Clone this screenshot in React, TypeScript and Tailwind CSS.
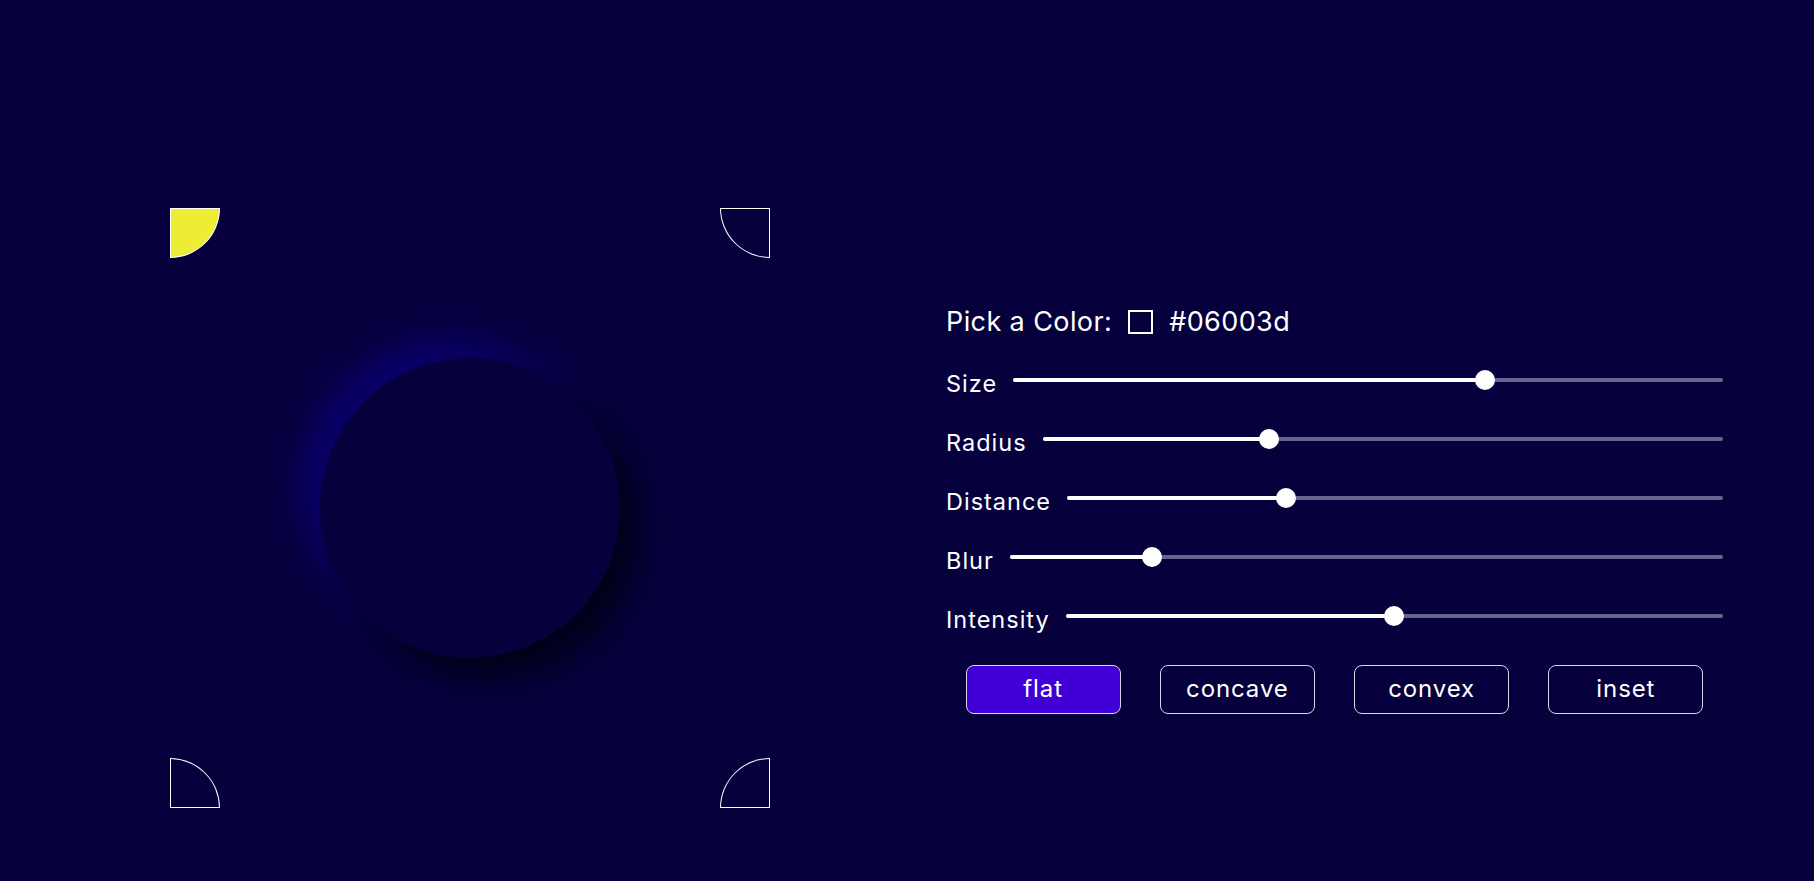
import React from "react";

const sliders: { label: string; f: number }[] = [
  { label: "Size", f: 0.67 },
  { label: "Radius", f: 0.328 },
  { label: "Distance", f: 0.328 },
  { label: "Blur", f: 0.19 },
  { label: "Intensity", f: 0.5 },
];

const shapes = ["flat", "concave", "convex", "inset"];

function Slider({ label, f }: { label: string; f: number }) {
  return (
    <div className="flex h-[59px] items-center">
      <span className="text-[23.5px] leading-normal tracking-[1px] text-white">{label}</span>
      <div className="relative mb-[7px] ml-[16px] h-5 flex-1">
        <div className="absolute left-0 right-0 top-[8px] h-1 rounded-full bg-[#66648e]" />
        <div
          className="absolute left-0 top-[8px] h-1 rounded-full bg-white"
          style={{ width: `calc(10px + ${f} * (100% - 20px))` }}
        />
        <div
          className="absolute top-0 h-5 w-5 rounded-full bg-white"
          style={{ left: `calc(${f} * (100% - 20px))` }}
        />
      </div>
    </div>
  );
}

export default function App() {
  return (
    <div
      className="flex h-[881px] w-full items-center bg-[#06003d] pl-[170px] pt-[135px] text-white"
      style={{ fontFamily: "Inter, 'Noto Sans', sans-serif" }}
    >
      {/* preview */}
      <div className="flex h-[600px] w-[600px] shrink-0 flex-col">
        <div className="flex h-[50px] justify-between">
          <div className="h-[50px] w-[50px] rounded-br-[50px] border border-white bg-[#eded35]" />
          <div className="h-[50px] w-[50px] rounded-bl-[50px] border border-white" />
        </div>
        <div className="flex flex-1 items-center justify-center">
          <div className="h-[300px] w-[300px] rounded-full bg-[#06003d] shadow-[20px_20px_34px_#020018,-20px_-20px_34px_#0b006c]" />
        </div>
        <div className="flex h-[50px] justify-between">
          <div className="h-[50px] w-[50px] rounded-tr-[50px] border border-white" />
          <div className="h-[50px] w-[50px] rounded-tl-[50px] border border-white" />
        </div>
      </div>

      {/* controls */}
      <div className="ml-[176px] flex w-[777px] flex-col">
        <div className="flex items-center text-[27px] leading-normal tracking-[0.4px]">
          <span>Pick a Color:</span>
          <span className="ml-[16px] h-[24px] w-[25px] border-[2.5px] border-white bg-[#06003d]" />
          <span className="ml-[16px]">#06003d</span>
        </div>
        <div className="mt-[12px] flex flex-col">
          {sliders.map((s) => (
            <Slider key={s.label} label={s.label} f={s.f} />
          ))}
        </div>
        <div className="mt-[16px] flex justify-around">
          {shapes.map((s) => (
            <button
              key={s}
              className={`flex h-[49px] w-[155px] items-center justify-center rounded-[8px] border border-[#d8d6e8] pb-[2px] text-[24px] tracking-[0.9px] text-white ${
                s === "flat" ? "bg-[#4000d6]" : "bg-[#06003d]"
              }`}
            >
              {s}
            </button>
          ))}
        </div>
      </div>
    </div>
  );
}
